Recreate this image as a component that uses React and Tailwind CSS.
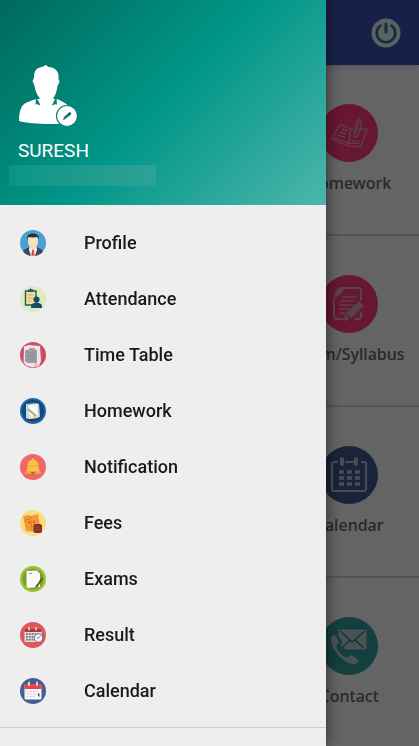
function AvatarIcon() {
  return (
    <svg viewBox="0 0 60 64" className="h-16 w-[60px]" aria-hidden="true">
      <path
        fill="#fff"
        d="M18 35c-5 2-10 3-13 6-3 4-4 9-4 16 9 3 36 4 52 2l-1-15c-3-5-9-7-13-9z"
      />
      <path
        fill="#fff"
        d="M16 14C15.500 7 19 3.500 24 3l4-2 2.500 2c7 0 11 5 10 12l1 3-2 4c-1 6-2 9-4 12l-1 4c-2 3-10 3-12 0l-1-4c-2-3-4-6-5-12l-2-5z"
      />
      <path fill="#0a7f70" d="m18 33 2.500 4 2 4.500-4-1.500-1 1zM38.500 33 36 37l-2 4.500 4-1.500 1 1z" />
      <circle cx="49" cy="52" r="10.5" fill="#fff" stroke="#0a7f70" strokeWidth="1.2" />
      <path fill="#1a6f66" d="m45 56 1-3 5.500-5 2 1-1 2-6 4.500z" />
    </svg>
  );
}

function ProfileIcon() {
  return (
    <>
      <circle cx="13" cy="13" r="13" fill="#4a9fd3" />
      <path fill="#3d4757" d="M3 21.5 5 19l5-2h6l5 2 2 2.500A13 13 0 0 1 13 26a13 13 0 0 1-10-4.500z" />
      <path fill="#f8f3ef" d="m9.500 17 3.500 2 3.500-2 .5 3-2 5.800h-4L9 20z" />
      <path fill="#d9505a" d="m12 20 1-1 1 1 .6 5-1.600 1-1.600-1z" />
      <path fill="#f7e2bd" d="M8 8c0-3 10-3 10 0v3c0 3-1 5-2 6.500L13 20l-3-2.500C9 16 8 14 8 11z" />
      <path fill="#27313d" d="M7.500 10c-1-4 1-6.500 5.500-6.500S19.500 6 18.500 10L17.500 7c-3 .5-6 .5-9 0z" />
    </>
  );
}

function AttendanceIcon() {
  return (
    <>
      <circle cx="13" cy="13" r="13" fill="#deebbe" />
      <path fill="#f1dda2" stroke="#2d5a62" strokeWidth="1.4" d="M5.500 5h10.500v14H5.500z" />
      <path fill="#2d5a62" d="M8 3.500h1.500l1.200-1.200L12 3.500h1.500V6H8z" />
      <path stroke="#c9b06d" strokeWidth="1" d="M8 9h6M8 12h5M8 15h3" />
      <circle cx="16.500" cy="13.500" r="3.100" fill="#164b66" />
      <path fill="#164b66" d="M11 22v-1.500c0-2.500 2-3.700 5.500-3.700s5.500 1.200 5.500 3.700V22z" />
    </>
  );
}

function TimeTableIcon() {
  return (
    <>
      <circle cx="13" cy="13" r="13" fill="#cf4a67" />
      <path fill="#f1e4e7" d="M4 4.500 9 3l11 1 1 15-2 5-6 1.500-7-2L3.500 20z" />
      <path fill="#9a9ca6" d="M5 8h3l2-2h4l1.500 2H17v13H7.500L5 19.500z" />
      <path stroke="#85868f" strokeWidth=".8" d="M7 11h8.500M7 14h8.500M7 17h8.500" />
      <path fill="#e9b9ad" d="m15 21 3 1-1 2.500-3-.5z" />
    </>
  );
}

function HomeworkIcon() {
  return (
    <>
      <circle cx="13" cy="13" r="13" fill="#2365ab" />
      <circle cx="13" cy="13" r="11" fill="#164876" />
      <path fill="#aedcf2" d="m6 6 10-1 3 1 1 13-12 2-2-1z" />
      <path fill="#f6fafa" d="m8 7 9-1 1 12-9 1z" />
      <path stroke="#4c7da6" strokeWidth="1" d="M9 5v2M12 4.500v2M15 4.500v2" />
      <path stroke="#c5a568" strokeWidth="2" d="m8 11 9 8" />
      <path fill="#efe2b8" d="m9 16 4 3 5-1v2l-9 1z" />
    </>
  );
}

function NotificationIcon() {
  return (
    <>
      <circle cx="13" cy="13" r="13" fill="#ee676a" />
      <path fill="#fbc344" d="M13 4.500c1 0 1.500.7 1.500 1.500 3 .7 4 2.800 4 5.500 0 3 .7 4.500 2 6.500v1.500h-15V18c1.300-2 2-3.500 2-6.500 0-2.700 1-4.800 4-5.500 0-.8.5-1.500 1.500-1.500z" />
      <path fill="#f3a536" d="M8 11.500h10v1H8zM6.500 17h13l1 1v1.500h-15V18z" />
      <path fill="#9d6339" d="M11 18h4c0 1.200-.8 2-2 2s-2-.8-2-2z" />
    </>
  );
}

function FeesIcon() {
  return (
    <>
      <circle cx="13" cy="13" r="13" fill="#fbdc81" />
      <path fill="#f19a34" d="m3 6 6-1 2 1 7-2 2 12-4 6-10-1z" />
      <path stroke="#dd7927" strokeWidth="1" d="m10 6 2 14M5 10l4-.5" />
      <path fill="#e4572e" d="m8 12 2-1 .5 2-2 .5zM13 11l2-.5v2l-2 .5z" />
      <rect x="13.500" y="14" width="8.500" height="9" rx="2" fill="#812f29" />
      <path stroke="#a84a37" strokeWidth="1" d="M15.500 17h5M15.500 19.500h5" />
    </>
  );
}

function ExamsIcon() {
  return (
    <>
      <circle cx="13" cy="13" r="13" fill="#9bc12e" />
      <circle cx="13" cy="13" r="10.500" fill="#77a12b" />
      <path fill="#fbf9f6" d="M6.500 5 17 4.500l3 3V21l-12 1-1.500-1z" />
      <path fill="#dcdad4" d="m17 4.500 3 3h-3z" />
      <path stroke="#9a9a9a" strokeWidth="1" d="M9 7.500h3" />
      <path stroke="#555e43" strokeWidth="2" d="m22.500 12-5.500 8" />
      <path fill="#333" d="m16 19 2 1-2.500 2z" />
    </>
  );
}

function ResultIcon() {
  return (
    <>
      <circle cx="13" cy="13" r="13" fill="#e0575a" />
      <rect x="4.500" y="7" width="17" height="13" rx="1" fill="#e9dddd" />
      <path fill="#a63b43" d="M4.500 7h17v3h-17z" />
      <path stroke="#eee" strokeWidth="1.300" d="M9 5v3.500M16 5v3.500" />
      <path stroke="#6f7b83" strokeWidth="1.800" strokeDasharray="2 .8" d="M6 12.200h14M6 14.900h13M6 17.600h9" />
      <circle cx="18.500" cy="16" r="4.200" fill="#f4f5f7" stroke="#56667a" strokeWidth=".8" />
      <path fill="none" stroke="#3a82b4" strokeWidth="1" d="M20.500 14 18.300 16.200 17 15.500" />
    </>
  );
}

function CalendarIcon() {
  return (
    <>
      <circle cx="13" cy="13" r="13" fill="#465d93" />
      <rect x="4.500" y="6" width="17" height="15.500" rx="1.500" fill="#f7f5f7" />
      <path fill="#e5434e" d="M4.500 11V7.500C4.500 6.500 5 6 6 6h14c1 0 1.500.5 1.500 1.500V11z" />
      <path stroke="#f6dfe2" strokeWidth="1.800" strokeLinecap="round" d="M9 4.500v2.500M17 4.500v2.500" />
      <path stroke="#d4ccd6" strokeWidth="1" strokeDasharray="2 1.300" d="M6.500 13.500h13M6.500 16h13M6.500 18.500h9" />
      <path fill="#5a5773" d="M18 15.500h1.500v3H18z" />
    </>
  );
}

function BookArt() {
  return (
    <g fill="none" stroke="#e8aabd" strokeWidth="1.1" strokeLinejoin="round">
      <path d="M20 20.500 12 34.500l3 2 13 5.500 13 1 6-18-8-.5M20 20.500l11 4.500h3M31 25l-3 17M14 34l14 5 13 1" />
      <path d="m22 25 6 2M20 28l6 2M18 31l7 2.500M32 37l7 .5" />
      <path d="m35 24 2-6 2-3 2 3v7l-4 8h-3zM37 18l4 1M35 25l5 1M38 20l-2 10" />
    </g>
  );
}

function SyllabusArt() {
  return (
    <>
      <g fill="none" stroke="#dfa9ba" strokeWidth="2" strokeLinecap="round">
        <path d="M20 13h18q3 0 3 3v9M14 25v16q0 3 3 3h6M35 44h3q3 0 3-3v-3" />
        <path d="M23 22h13M21 26h13M20 30h13M20 34h9M20 38h6" strokeWidth="1.600" />
      </g>
      <path fill="#dfa9ba" d="m20 12 4 2-3 5-8 5 3-8z" />
      <path fill="#dfa9ba" d="m39 26 5 5-13 12-5-5zM25 39l5 5-6 2z" />
    </>
  );
}

function CalendarArt() {
  return (
    <>
      <g fill="none" stroke="#b6bfd6" strokeWidth="2.200" strokeLinecap="round">
        <path d="M17 16h-3q-2 0-2 2v25q0 2 2 2h30q2 0 2-2V18q0-2-2-2h-2M26 16h8" />
        <path d="M22 13v5M36 13v5" strokeWidth="4" />
      </g>
      <g stroke="#b6bfd6" strokeWidth="3.600" strokeDasharray="5 3">
        <path d="M19 26h21M19 32h21M19 38h21" />
      </g>
    </>
  );
}

function ContactArt() {
  return (
    <>
      <path fill="#b9cfcf" d="M11 21c0-2 2-3 4-3l4 7-3 4c2 6 6 10 11 12l4-3 8 5c-1 3-3 4-5 4-9 0-24-14-23-26z" />
      <path fill="#b9cfcf" stroke="#359c9c" strokeWidth="1" d="M18 12h29v21H25l-5-5 2-3-4-6z" />
      <path fill="none" stroke="#2c7f7f" strokeWidth="1.500" d="m20 14 12 11 13-11M22 31l8-8M44 31l-9-8" />
    </>
  );
}

function PowerIcon() {
  return (
    <svg viewBox="0 0 30 30" className="size-[30px]" aria-hidden="true">
      <circle cx="15" cy="15" r="14.5" fill="#e0f2fa" />
      <g fill="none" stroke="#2d7580" strokeLinecap="round">
        <path strokeWidth="2.600" d="M9.500 7.500a9.300 9.300 0 1 0 11 0" />
        <path strokeWidth="3" d="M15 6v8" />
      </g>
    </svg>
  );
}

const menuItems = [
  { name: "Profile", Icon: ProfileIcon },
  { name: "Attendance", Icon: AttendanceIcon },
  { name: "Time Table", Icon: TimeTableIcon },
  { name: "Homework", Icon: HomeworkIcon },
  { name: "Notification", Icon: NotificationIcon },
  { name: "Fees", Icon: FeesIcon },
  { name: "Exams", Icon: ExamsIcon },
  { name: "Result", Icon: ResultIcon },
  { name: "Calendar", Icon: CalendarIcon },
];

const tiles = [
  { name: "Homework", color: "bg-[#ff3a7d]", Art: BookArt },
  { name: "Exam/Syllabus", color: "bg-[#ff3a7d]", Art: SyllabusArt },
  { name: "Calendar", color: "bg-[#40588f]", Art: CalendarArt },
  { name: "Contact", color: "bg-[#359c9c]", Art: ContactArt },
];

function Dashboard() {
  return (
    <div className="flex min-h-screen flex-col bg-[#fafafa]">
      <header className="z-10 flex h-[65px] items-center justify-end bg-[#3f51b5] px-[18px] shadow-md">
        <button type="button" aria-label="Log out">
          <PowerIcon />
        </button>
      </header>

      <main className="flex-1">
        {tiles.map(({ name, color, Art }) => (
          <div key={name} className="grid h-[171px] grid-cols-3 border-b-2 border-[#d4d4d4]">
            <a href="#" className="col-start-3 flex flex-col items-center gap-[9px] pt-[39px] text-[#646464]">
              <span className={`flex size-[58px] items-center justify-center rounded-full ${color}`}>
                <svg viewBox="0 0 58 58" className="size-[58px]" aria-hidden="true">
                  <Art />
                </svg>
              </span>
              <span className="font-['Noto_Sans',sans-serif] text-base font-medium">{name}</span>
            </a>
          </div>
        ))}
      </main>
    </div>
  );
}

function Drawer() {
  return (
    <aside className="fixed inset-y-0 left-0 z-30 w-[326px] overflow-hidden bg-[#eeeeee] shadow-[0_0_14px_rgba(0,0,0,0.6)]">
      {/* account header */}
      <div className="flex h-[205px] flex-col justify-end bg-linear-[135deg] from-[#00695c] via-[#009688] to-[#4db6ac] pb-[19px]">
        <div className="px-[18px]">
          <AvatarIcon />
          <p className="mt-2 text-[19px] leading-[29px] text-white">SURESH</p>
        </div>
        <div className="ml-[9px] h-[21px] w-[147px] bg-linear-to-r from-[#079585] to-[#2ca295]" />
      </div>

      {/* menu */}
      <nav className="border-b border-[#cfcfcf] pt-[10px] pb-2">
        <ul>
          {menuItems.map(({ name, Icon }) => (
            <li key={name}>
              <a href="#" className="flex h-14 items-center gap-[38px] px-5 text-lg font-medium text-[#1a1a1a]">
                <svg viewBox="0 0 26 26" fill="none" className="size-[26px]" aria-hidden="true">
                  <Icon />
                </svg>
                {name}
              </a>
            </li>
          ))}
        </ul>
      </nav>
    </aside>
  );
}

function App() {
  return (
    <div className="h-screen overflow-hidden font-[Roboto,sans-serif]">
      <Dashboard />
      {/* scrim */}
      <div className="fixed inset-0 z-20 bg-black/60" />
      <Drawer />
    </div>
  );
}

export default App;
